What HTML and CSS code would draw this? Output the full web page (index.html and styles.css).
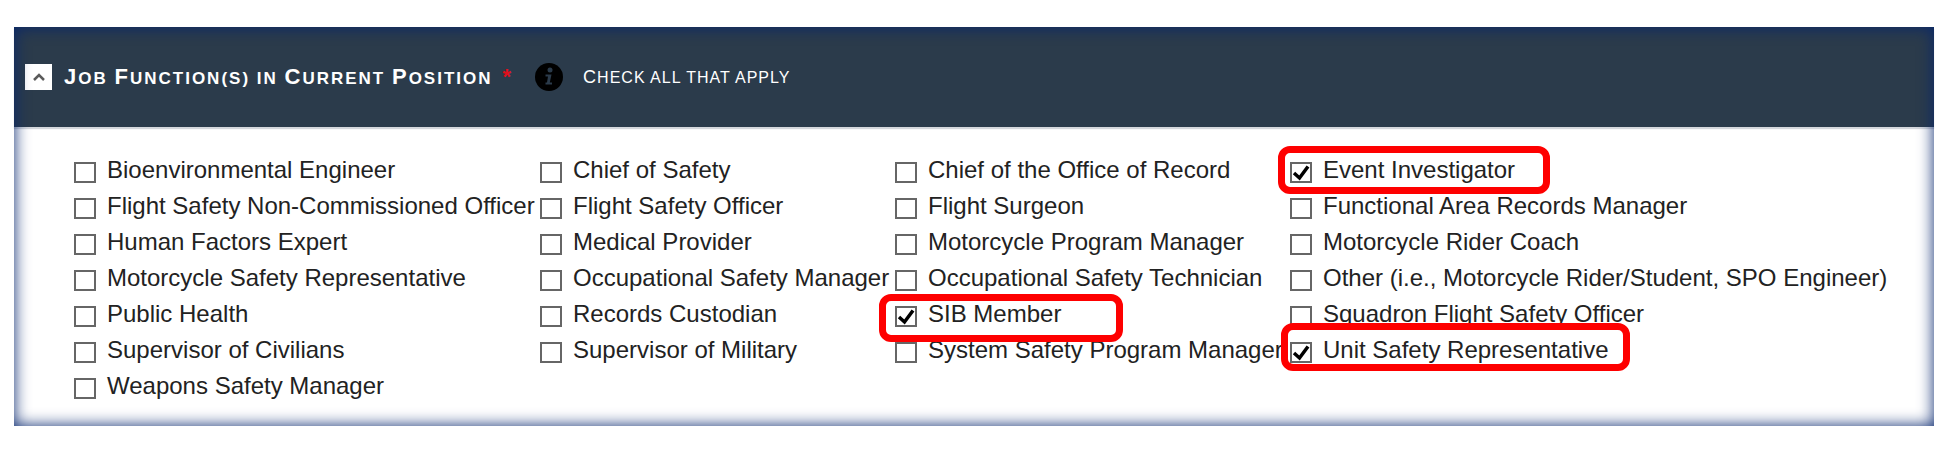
FILE: index.html
```html
<!DOCTYPE html>
<html lang="en">
<head>
  <meta charset="UTF-8">
  <meta name="viewport" content="width=device-width, initial-scale=1.0">
  <title>Job Function(s) in Current Position</title>
  <link rel="stylesheet" href="styles.css">
</head>
<body>
  <section class="panel">
    <header class="panel-header">
      <button class="toggle" type="button" aria-label="Collapse section" aria-expanded="true">
        <svg width="14" height="10" viewBox="0 0 14 10"><path d="M2 8L7 3L12 8" fill="none" stroke="#5a5a5a" stroke-width="2.5"/></svg>
      </button>
      <h2><span class="cap">J</span>ob <span class="cap">F</span>unction(s) in <span class="cap">C</span>urrent <span class="cap">P</span>osition</h2>
      <span class="required">*</span>
      <svg class="info" width="28" height="28" viewBox="0 0 28 28">
        <circle cx="14" cy="14" r="14" fill="#000"/>
        <circle cx="15" cy="7" r="2.5" fill="#2b3b4b"/>
        <path d="M10.5 11.5H16.5L14.8 19.5H17V21.5H10.5V19.5H12L13 13.5H10.5Z" fill="#2b3b4b"/>
      </svg>
      <p class="hint"><span class="cap">C</span>heck all that apply</p>
    </header>

    <form class="options">
      <label><input type="checkbox">Bioenvironmental Engineer</label>
      <label><input type="checkbox">Chief of Safety</label>
      <label><input type="checkbox">Chief of the Office of Record</label>
      <label class="marked marked-event"><input type="checkbox" checked>Event Investigator</label>

      <label><input type="checkbox">Flight Safety Non-Commissioned Officer</label>
      <label><input type="checkbox">Flight Safety Officer</label>
      <label><input type="checkbox">Flight Surgeon</label>
      <label><input type="checkbox">Functional Area Records Manager</label>

      <label><input type="checkbox">Human Factors Expert</label>
      <label><input type="checkbox">Medical Provider</label>
      <label><input type="checkbox">Motorcycle Program Manager</label>
      <label><input type="checkbox">Motorcycle Rider Coach</label>

      <label><input type="checkbox">Motorcycle Safety Representative</label>
      <label><input type="checkbox">Occupational Safety Manager</label>
      <label><input type="checkbox">Occupational Safety Technician</label>
      <label><input type="checkbox">Other (i.e., Motorcycle Rider/Student, SPO Engineer)</label>

      <label><input type="checkbox">Public Health</label>
      <label><input type="checkbox">Records Custodian</label>
      <label class="marked marked-sib"><input type="checkbox" checked>SIB Member</label>
      <label><input type="checkbox">Squadron Flight Safety Officer</label>

      <label><input type="checkbox">Supervisor of Civilians</label>
      <label><input type="checkbox">Supervisor of Military</label>
      <label><input type="checkbox">System Safety Program Manager</label>
      <label class="marked marked-unit"><input type="checkbox" checked>Unit Safety Representative</label>

      <label><input type="checkbox">Weapons Safety Manager</label>
    </form>
  </section>
</body>
</html>
```
FILE: styles.css
```css
*, *::after {
  box-sizing: border-box;
}
body {
  font-family: "Liberation Sans", Arial, sans-serif;
  background: #fff;
  margin: 0;
  padding: 27px 10px 28px 14px;
}
.panel {
  position: relative;
  background: #fff;
}
/* inner shadow lies over the header and the options */
.panel::after {
  content: "";
  position: absolute;
  inset: 0;
  box-shadow: inset 0 0 16px #05256d;
  pointer-events: none;
}
.panel-header {
  display: flex;
  align-items: center;
  height: 100px;
  padding: 0 11px;
  background: #2b3b4b;
  color: #fff;
  box-shadow: 0 2px 1px #d4d7dc;
}
.toggle {
  display: flex;
  align-items: center;
  justify-content: center;
  width: 27px;
  height: 26px;
  margin-right: 12px;
  padding: 0;
  border: none;
  background: #fff;
}
h2, .hint {
  margin: 0;
  text-transform: uppercase;
  white-space: nowrap;
}
h2 {
  font-size: 17px;
  letter-spacing: 2px;
}
h2 .cap {
  font-size: 22px;
}
.required {
  margin: 0 24px 0 10px;
  color: #e0101c;
  font-size: 22px;
  font-weight: bold;
}
.info {
  margin-right: 20px;
}
.hint {
  font-size: 16px;
  letter-spacing: 1px;
}
.hint .cap {
  font-size: 18px;
}
.options {
  display: grid;
  grid-template-columns: 466fr 355fr 395fr 644fr;
  grid-auto-rows: 36px;
  padding: 25px 0 22px 60px;
}
label {
  display: flex;
  align-items: center;
  color: #222;
  font-size: 24px;
  line-height: 32px;
  white-space: nowrap;
}
input {
  appearance: none;
  width: 22px;
  height: 21px;
  margin: 4px 11px 0 0;
  border: 2px solid #666;
  background: #fff;
}
input:checked {
  background: #fff url("data:image/svg+xml,%3Csvg xmlns='http://www.w3.org/2000/svg' viewBox='0 0 18 17'%3E%3Cpath d='M2 9L7.5 14L16 2.5' fill='none' stroke='%23000' stroke-width='3.5'/%3E%3C/svg%3E") center / 18px 17px no-repeat;
}
/* red frames round the picked options */
.marked {
  position: relative;
}
.marked::after {
  content: "";
  position: absolute;
  z-index: 1;
  height: 48px;
  border: 7px solid #fe0000;
  border-radius: 12px;
  pointer-events: none;
}
.marked-event::after {
  top: -6px;
  left: -12px;
  width: 272px;
}
.marked-sib::after {
  top: -2px;
  left: -16px;
  width: 244px;
}
.marked-unit::after {
  top: -9px;
  left: -9px;
  width: 349px;
}
```
